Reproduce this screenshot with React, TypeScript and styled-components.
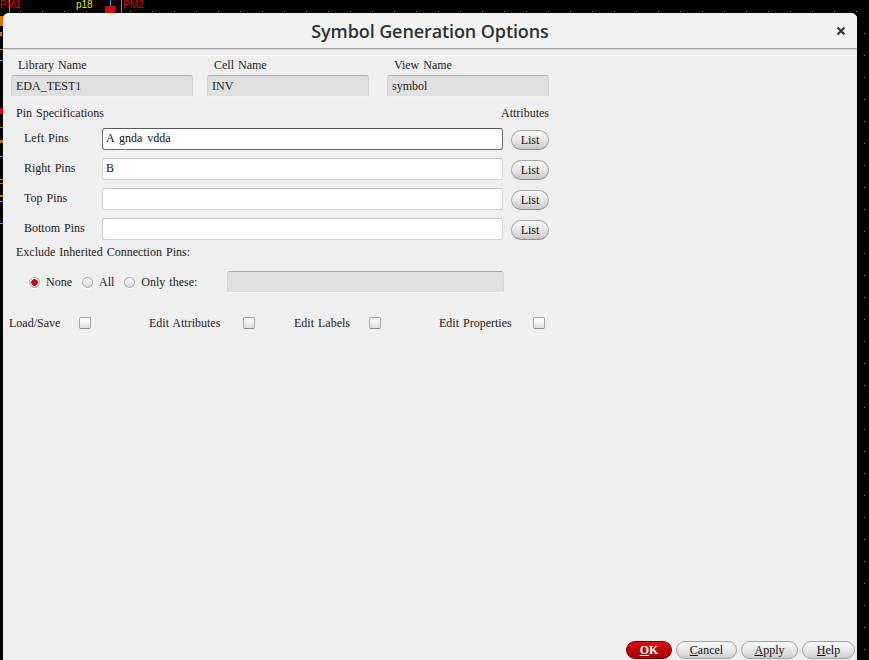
import styled, { createGlobalStyle } from "styled-components";

const GlobalStyle = createGlobalStyle`
	html, body {
		margin: 0;
		padding: 0;
		background: #000;
		overflow: hidden;
	}
	body {
		font-family: "Liberation Serif", "DejaVu Serif", serif;
		font-size: 12px;
		color: #222;
	}
`;

const Screen = styled.div`
	position: relative;
	width: 869px;
	height: 660px;
	overflow: hidden;
	padding: 13px 12px 0 3px;
	box-sizing: border-box;
`;

const Canvas = styled.svg`
	position: absolute;
	left: 0;
	top: 0;
	pointer-events: none;
`;

const Dialog = styled.div`
	position: relative;
	width: 854px;
	height: 647px;
	background: #efefef;
	border-radius: 6px 6px 0 0;
	display: flex;
	flex-direction: column;
	overflow: hidden;
`;

const TitleBar = styled.div`
	height: 35px;
	flex: none;
	background: #f3f3f3;
	border-bottom: 1px solid #a4a49e;
	box-shadow: 0 1px 0 #d8d8d6;
	display: flex;
	align-items: center;
	justify-content: center;
	position: relative;
`;

const Title = styled.h1`
	margin: 0;
	font-family: "Open Sans", "Noto Sans", sans-serif;
	font-size: 18px;
	font-weight: 600;
	color: #2e3436;
	letter-spacing: -0.1px;
`;

const CloseButton = styled.button`
	position: absolute;
	right: 10px;
	top: 12px;
	width: 12px;
	height: 12px;
	padding: 0;
	border: none;
	background: transparent;
	display: flex;
	align-items: center;
	justify-content: center;
`;

const Content = styled.div`
	flex: 1;
	padding: 0 0 0 8px;
	display: flex;
	flex-direction: column;
`;

const NameRow = styled.div`
	display: flex;
	margin-top: 9px;
`;

const NameField = styled.div<{ $w: number; $gap: number }>`
	width: ${({ $w }) => $w}px;
	margin-right: ${({ $gap }) => $gap}px;
	display: flex;
	flex-direction: column;
`;

const FieldLabel = styled.span`
	padding-left: 7px;
	height: 15px;
	line-height: 15px;
	word-spacing: 1px;
`;

const ReadOnlyBox = styled.div`
	margin-top: 2px;
	height: 22px;
	box-sizing: border-box;
	background: #e0e0e0;
	border: 1px solid #d2d2d2;
	border-top-color: #b4b4b4;
	border-bottom-color: #f6f6f6;
	border-radius: 3px;
	padding: 0 4px;
	line-height: 20px;
`;

const SectionHead = styled.div`
	display: flex;
	justify-content: space-between;
	width: 538px;
	margin-top: 8px;
	height: 16px;
	line-height: 16px;
	padding-left: 5px;
	box-sizing: border-box;
	word-spacing: 1px;
`;

const PinRows = styled.div`
	display: flex;
	flex-direction: column;
	gap: 8px;
	margin-top: 6px;
`;

const PinRow = styled.div`
	display: grid;
	grid-template-columns: 83px 401px 38px;
	column-gap: 8px;
	align-items: center;
	height: 22px;
`;

const PinLabel = styled.span`
	padding-left: 13px;
	word-spacing: 1px;
	margin-top: -1px;
`;

const TextInput = styled.input<{ $focus?: boolean }>`
	height: 22px;
	box-sizing: border-box;
	margin: 0;
	background: #fff;
	border: 1px solid ${({ $focus }) => ($focus ? "#6e6e6e" : "#d4d4d4")};
	border-top-color: ${({ $focus }) => ($focus ? "#5a5a5a" : "#c4c4c4")};
	border-radius: 3px;
	padding: 0 3px;
	font-family: "Liberation Serif", "DejaVu Serif", serif;
	font-size: 12px;
	color: #111;
	word-spacing: 2px;
	outline: none;
`;

const PillButton = styled.button`
	height: 20px;
	width: 38px;
	padding: 0;
	margin-top: 3px;
	border: 1px solid #a6a6a6;
	border-bottom-color: #8c8c8c;
	border-radius: 10px;
	background: linear-gradient(#fafafa, #e4e4e4 55%, #c9c9c9);
	font-family: "Liberation Serif", "DejaVu Serif", serif;
	font-size: 12px;
	color: #111;
`;

const ExcludeLabel = styled.div`
	margin-top: 5px;
	padding-left: 5px;
	height: 16px;
	line-height: 16px;
	word-spacing: 1px;
`;

const RadioRow = styled.div`
	display: flex;
	align-items: center;
	margin-top: 11px;
	padding-left: 18px;
	height: 22px;
`;

const RadioItem = styled.label`
	display: flex;
	align-items: center;
	gap: 6px;
	margin-right: 10px;
	word-spacing: 1px;
`;

const RadioDot = styled.span<{ $on?: boolean }>`
	width: 11px;
	height: 11px;
	box-sizing: border-box;
	border-radius: 50%;
	border: 1px solid #a8a8a8;
	background: ${({ $on }) =>
		$on
			? "radial-gradient(circle, #d40000 0 2.5px, #b00000 3px, transparent 3.5px), linear-gradient(#ffffff, #dcdcdc)"
			: "linear-gradient(#ffffff, #d8d8d8)"};
	box-shadow: 0 1px 0 #fff;
`;

const DisabledBox = styled.div`
	width: 277px;
	height: 22px;
	box-sizing: border-box;
	margin-left: 20px;
	background: #e0e0e0;
	border: 1px solid #d6d6d6;
	border-top-color: #a8a8a8;
	border-bottom-color: #f8f8f8;
	border-radius: 3px;
`;

const CheckRow = styled.div`
	display: flex;
	align-items: center;
	margin-top: 22px;
	margin-left: -2px;
	height: 16px;
`;

const CheckItem = styled.label<{ $labelW: number; $after: number }>`
	display: flex;
	align-items: center;
	margin-right: ${({ $after }) => $after}px;

	span {
		width: ${({ $labelW }) => $labelW}px;
		word-spacing: 1px;
	}
`;

const CheckBox = styled.span`
	display: block;
	width: 12px !important;
	height: 12px;
	box-sizing: border-box;
	border: 1px solid #a4a4a4;
	border-bottom-color: #8a8a8a;
	border-radius: 2px;
	background: linear-gradient(#ffffff, #dedede);
`;

const Footer = styled.div`
	display: flex;
	justify-content: flex-end;
	gap: 4px;
	padding: 0 2px 1px 0;
`;

const DialogButton = styled.button<{ $primary?: boolean; $w: number }>`
	width: ${({ $w }) => $w}px;
	height: 18px;
	padding: 0;
	border-radius: 9px;
	border: 1px solid ${({ $primary }) => ($primary ? "#7a0000" : "#a2a2a2")};
	background: ${({ $primary }) =>
		$primary
			? "linear-gradient(#e01010, #c00000 50%, #a40000)"
			: "linear-gradient(#fbfbfb, #e6e6e6 55%, #cdcdcd)"};
	color: ${({ $primary }) => ($primary ? "#fff" : "#111")};
	font-family: "Liberation Serif", "DejaVu Serif", serif;
	font-size: 12px;
	font-weight: ${({ $primary }) => ($primary ? 700 : 400)};
	line-height: 16px;

	u {
		text-underline-offset: 1px;
	}
`;

const dotsTop = Array.from({ length: 40 }, (_, i) => 20 + i * 22);
const dotsRight = Array.from({ length: 30 }, (_, i) => 33 + i * 22);

function Schematic() {
	return (
		<Canvas width={869} height={660}>
			{dotsTop.map((x) => (
				<rect key={x} x={x} y={11} width={1} height={1} fill="#8a8a8a" />
			))}
			{dotsRight.map((y) => (
				<rect key={y} x={864} y={y} width={1} height={1} fill="#8a8a8a" />
			))}
			<line x1={9.5} y1={0} x2={9.5} y2={13} stroke="#3aa0e0" />
			<line x1={110.5} y1={0} x2={110.5} y2={6} stroke="#3aa0e0" />
			<line x1={121.5} y1={0} x2={121.5} y2={13} stroke="#3aa0e0" />
			<rect x={105} y={6} width={10} height={7} fill="#e00000" />
			<text x={0} y={8} fill="#e00000" fontFamily="Liberation Sans, sans-serif" fontSize={10}>
				PM1
			</text>
			<text x={76} y={8} fill="#e8e800" fontFamily="Liberation Sans, sans-serif" fontSize={10}>
				p18
			</text>
			<text x={123} y={8} fill="#e00000" fontFamily="Liberation Sans, sans-serif" fontSize={10}>
				PM2
			</text>
			<rect x={0} y={16} width={3} height={10} fill="#e07000" />
			<rect x={0} y={32} width={2} height={4} fill="#e07000" />
			<rect x={0} y={49} width={3} height={1} fill="#e07000" />
			<rect x={0} y={60} width={3} height={1} fill="#3aa0e0" />
			<rect x={0} y={108} width={3} height={6} fill="#e00000" />
			<rect x={0} y={127} width={3} height={1} fill="#e07000" />
			<rect x={0} y={140} width={3} height={3} fill="#e07000" />
			<rect x={0} y={156} width={3} height={1} fill="#3aa0e0" />
			<rect x={0} y={179} width={3} height={1} fill="#e07000" />
			<rect x={0} y={183} width={3} height={1} fill="#e07000" />
			<rect x={0} y={195} width={3} height={2} fill="#e07000" />
			<rect x={0} y={201} width={3} height={1} fill="#3aa0e0" />
			<rect x={0} y={223} width={3} height={1} fill="#3aa0e0" />
		</Canvas>
	);
}

const pinRows = [
	{ label: "Left Pins", value: "A gnda vdda", focus: true },
	{ label: "Right Pins", value: "B" },
	{ label: "Top Pins", value: "" },
	{ label: "Bottom Pins", value: "" },
];

const checks = [
	{ label: "Load/Save", w: 70, after: 58 },
	{ label: "Edit Attributes", w: 94, after: 39 },
	{ label: "Edit Labels", w: 75, after: 58 },
	{ label: "Edit Properties", w: 94, after: 0 },
];

function App() {
	return (
		<Screen>
			<GlobalStyle />
			<Schematic />
			<Dialog>
				<TitleBar>
					<Title>Symbol Generation Options</Title>
					<CloseButton>
						<svg width="10" height="10" viewBox="0 0 10 10">
							<path d="M1.5 1.5 L8.5 8.5 M8.5 1.5 L1.5 8.5" stroke="#2e3436" strokeWidth="2" />
						</svg>
					</CloseButton>
				</TitleBar>

				<Content>
					<NameRow>
						<NameField $w={182} $gap={14}>
							<FieldLabel>Library Name</FieldLabel>
							<ReadOnlyBox>EDA_TEST1</ReadOnlyBox>
						</NameField>
						<NameField $w={162} $gap={18}>
							<FieldLabel>Cell Name</FieldLabel>
							<ReadOnlyBox>INV</ReadOnlyBox>
						</NameField>
						<NameField $w={162} $gap={0}>
							<FieldLabel>View Name</FieldLabel>
							<ReadOnlyBox>symbol</ReadOnlyBox>
						</NameField>
					</NameRow>

					<SectionHead>
						<span>Pin Specifications</span>
						<span>Attributes</span>
					</SectionHead>

					<PinRows>
						{pinRows.map((row) => (
							<PinRow key={row.label}>
								<PinLabel>{row.label}</PinLabel>
								<TextInput $focus={row.focus} defaultValue={row.value} />
								<PillButton>List</PillButton>
							</PinRow>
						))}
					</PinRows>

					<ExcludeLabel>Exclude Inherited Connection Pins:</ExcludeLabel>
					<RadioRow>
						<RadioItem>
							<RadioDot $on />
							None
						</RadioItem>
						<RadioItem>
							<RadioDot />
							All
						</RadioItem>
						<RadioItem>
							<RadioDot />
							Only these:
						</RadioItem>
						<DisabledBox />
					</RadioRow>

					<CheckRow>
						{checks.map((c) => (
							<CheckItem key={c.label} $labelW={c.w} $after={c.after}>
								<span>{c.label}</span>
								<CheckBox />
							</CheckItem>
						))}
					</CheckRow>
				</Content>

				<Footer>
					<DialogButton $primary $w={46}>
						<u>O</u>K
					</DialogButton>
					<DialogButton $w={61}>
						<u>C</u>ancel
					</DialogButton>
					<DialogButton $w={57}>
						<u>A</u>pply
					</DialogButton>
					<DialogButton $w={53}>
						<u>H</u>elp
					</DialogButton>
				</Footer>
			</Dialog>
		</Screen>
	);
}

export default App;
